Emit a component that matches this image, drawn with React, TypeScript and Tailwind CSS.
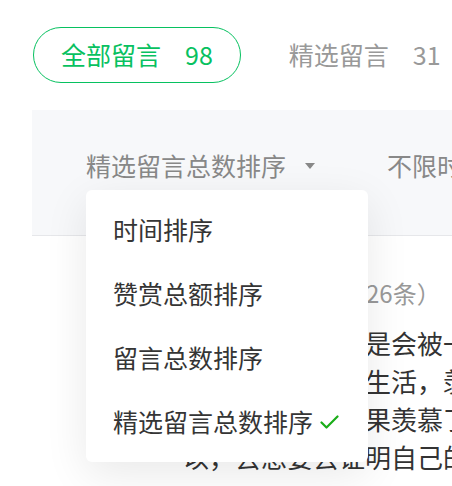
const font = { fontFamily: '"Noto Sans CJK SC", "Noto Sans", sans-serif' };

const sortOptions = ["时间排序", "赞赏总额排序", "留言总数排序", "精选留言总数排序"];

const bodyLines = [
  "每个人其实也总是会被一些东西所吸引",
  "羡慕别人的美好生活，羡慕别人的工作",
  "别人的成功。如果羡慕了太久，所",
  "以，去想要去证明自己的",
];

const Check = () => (
  <svg width="19" height="14" viewBox="0 0 19 14" className="ml-[7px] shrink-0">
    <path d="M1.5 7.5 L6.5 12.5 L17.5 1.5" fill="none" stroke="#1aad19" strokeWidth="2.2" strokeLinecap="round" strokeLinejoin="round" />
  </svg>
);

export default function App() {
  return (
    <div className="relative w-[452px] h-[486px] overflow-hidden bg-white" style={font}>
      {/* tabs */}
      <div className="flex items-center pl-[33px] pt-[27px] whitespace-nowrap">
        <div className="flex items-center h-[56px] px-[27px] rounded-full border-[1.5px] border-[#07c160] text-[#07c160] text-[25px]">
          <span>全部留言</span>
          <span className="ml-[24px]">98</span>
        </div>
        <div className="flex items-center ml-[48px] text-[25px] text-[#999]">
          <span>精选留言</span>
          <span className="ml-[24px]">31</span>
        </div>
      </div>

      {/* filter band */}
      <div className="ml-[32px] mt-[27px] h-[126px] bg-[#f7f8fa] border-b border-[#e6e7ea] flex items-center pl-[54px] pb-[13px] whitespace-nowrap">
        <span className="text-[25px] text-[#888]">精选留言总数排序</span>
        <span className="ml-[19px] w-0 h-0 border-l-[5px] border-r-[5px] border-t-[6px] border-l-transparent border-r-transparent border-t-[#888]" />
        <div className="ml-[38px] w-px h-[35px] bg-[#dfe0e3]" />
        <span className="ml-[34px] text-[25px] text-[#888]">不限时间</span>
      </div>

      {/* comment behind */}
      <div className="pl-[183px] pt-[42px] whitespace-nowrap">
        <div className="text-[24px] leading-[30px] text-[#999]">
          <span className="text-[#576b95]">程序员小明同</span>
          <span className="ml-[15px]">（26条）</span>
        </div>
        <div className="mt-[16px] text-[26px] leading-[38px] text-[#333]">
          {bodyLines.map((l, i) => (
            <div key={i}>{l}</div>
          ))}
        </div>
      </div>

      {/* dropdown */}
      <div className="absolute left-[86px] top-[190px] w-[282px] py-2 bg-white rounded-[6px] shadow-[0_12px_44px_rgba(0,0,0,0.09)]">
        {sortOptions.map((o, i) => (
          <div key={o} className="flex items-center h-16 pl-[27px] text-[25px] text-[#353535]">
            <span>{o}</span>
            {i === sortOptions.length - 1 && <Check />}
          </div>
        ))}
      </div>
    </div>
  );
}
